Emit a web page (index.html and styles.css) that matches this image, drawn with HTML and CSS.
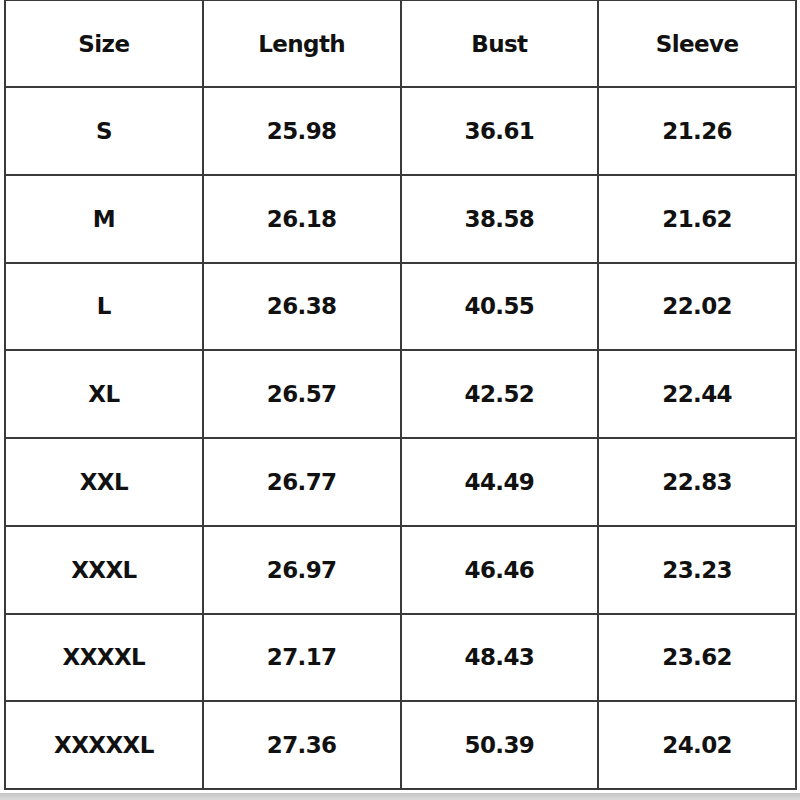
FILE: index.html
```html
<!DOCTYPE html>
<html>
<head>
<meta charset="utf-8">
<link rel="stylesheet" href="styles.css">
</head>
<body>
<div class="page">
  <div class="chart">
    <div class="cell">Size</div><div class="cell">Length</div><div class="cell">Bust</div><div class="cell">Sleeve</div>
    <div class="cell">S</div><div class="cell">25.98</div><div class="cell">36.61</div><div class="cell">21.26</div>
    <div class="cell">M</div><div class="cell">26.18</div><div class="cell">38.58</div><div class="cell">21.62</div>
    <div class="cell">L</div><div class="cell">26.38</div><div class="cell">40.55</div><div class="cell">22.02</div>
    <div class="cell">XL</div><div class="cell">26.57</div><div class="cell">42.52</div><div class="cell">22.44</div>
    <div class="cell">XXL</div><div class="cell">26.77</div><div class="cell">44.49</div><div class="cell">22.83</div>
    <div class="cell">XXXL</div><div class="cell">26.97</div><div class="cell">46.46</div><div class="cell">23.23</div>
    <div class="cell">XXXXL</div><div class="cell">27.17</div><div class="cell">48.43</div><div class="cell">23.62</div>
    <div class="cell">XXXXXL</div><div class="cell">27.36</div><div class="cell">50.39</div><div class="cell">24.02</div>
  </div>
  <div class="shadow"></div>
</div>
</body>
</html>
```
FILE: styles.css
```css
html, body {
  margin: 0;
  padding: 0;
  background: #ffffff;
}
.page {
  width: 800px;
  height: 800px;
  overflow: hidden;
  padding-left: 4px;
  box-sizing: border-box;
}
.chart {
  width: 793px;
  height: 790px;
  box-sizing: border-box;
  display: grid;
  grid-template-columns: repeat(4, 1fr);
  grid-template-rows: 85px repeat(8, 1fr);
  gap: 2px;
  border: 2px solid #3a3a3a;
  border-top-width: 1px;
  background: #3a3a3a;
}
.cell {
  background: #ffffff;
  display: flex;
  align-items: center;
  justify-content: center;
  font-family: "DejaVu Sans", Verdana, sans-serif;
  font-weight: bold;
  font-size: 23px;
  color: #111111;
  letter-spacing: -0.6px;
}
.shadow {
  margin-top: 3px;
  margin-left: -4px;
  width: 800px;
  height: 7px;
  background: linear-gradient(to bottom, #c4c4c4, #dcdcdc);
}
```
